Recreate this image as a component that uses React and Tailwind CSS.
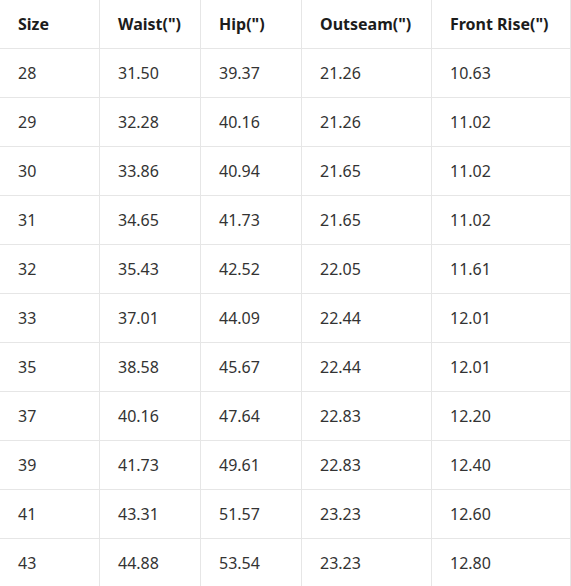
import React from "react";

const headers = ["Size", 'Waist(")', 'Hip(")', 'Outseam(")', 'Front Rise(")'];
const rows = [
  ["28", "31.50", "39.37", "21.26", "10.63"],
  ["29", "32.28", "40.16", "21.26", "11.02"],
  ["30", "33.86", "40.94", "21.65", "11.02"],
  ["31", "34.65", "41.73", "21.65", "11.02"],
  ["32", "35.43", "42.52", "22.05", "11.61"],
  ["33", "37.01", "44.09", "22.44", "12.01"],
  ["35", "38.58", "45.67", "22.44", "12.01"],
  ["37", "40.16", "47.64", "22.83", "12.20"],
  ["39", "41.73", "49.61", "22.83", "12.40"],
  ["41", "43.31", "51.57", "23.23", "12.60"],
  ["43", "44.88", "53.54", "23.23", "12.80"],
];
const widths = ["w-[100px]", "w-[101px]", "w-[101px]", "w-[130px]", "w-[139px]"];

export default function App() {
  return (
    <div className="w-[571px] h-[586px] overflow-hidden bg-white font-['Noto_Sans','Open_Sans',sans-serif]">
      <div className="flex flex-col">
        <div className="flex h-[49px] border-b border-[#e6e6e6]">
          {headers.map((h, i) => (
            <div
              key={i}
              className={`${widths[i]} shrink-0 flex items-center pl-[18px] border-r border-[#e6e6e6] text-[16px] font-bold text-[#1c1c1c]`}
            >
              {h}
            </div>
          ))}
        </div>
        {rows.map((r, ri) => (
          <div key={ri} className="flex h-[49px] border-b border-[#e6e6e6]">
            {r.map((c, i) => (
              <div
                key={i}
                className={`${widths[i]} shrink-0 flex items-center pl-[18px] border-r border-[#e6e6e6] text-[16px] text-[#333333]`}
              >
                {c}
              </div>
            ))}
          </div>
        ))}
      </div>
    </div>
  );
}
